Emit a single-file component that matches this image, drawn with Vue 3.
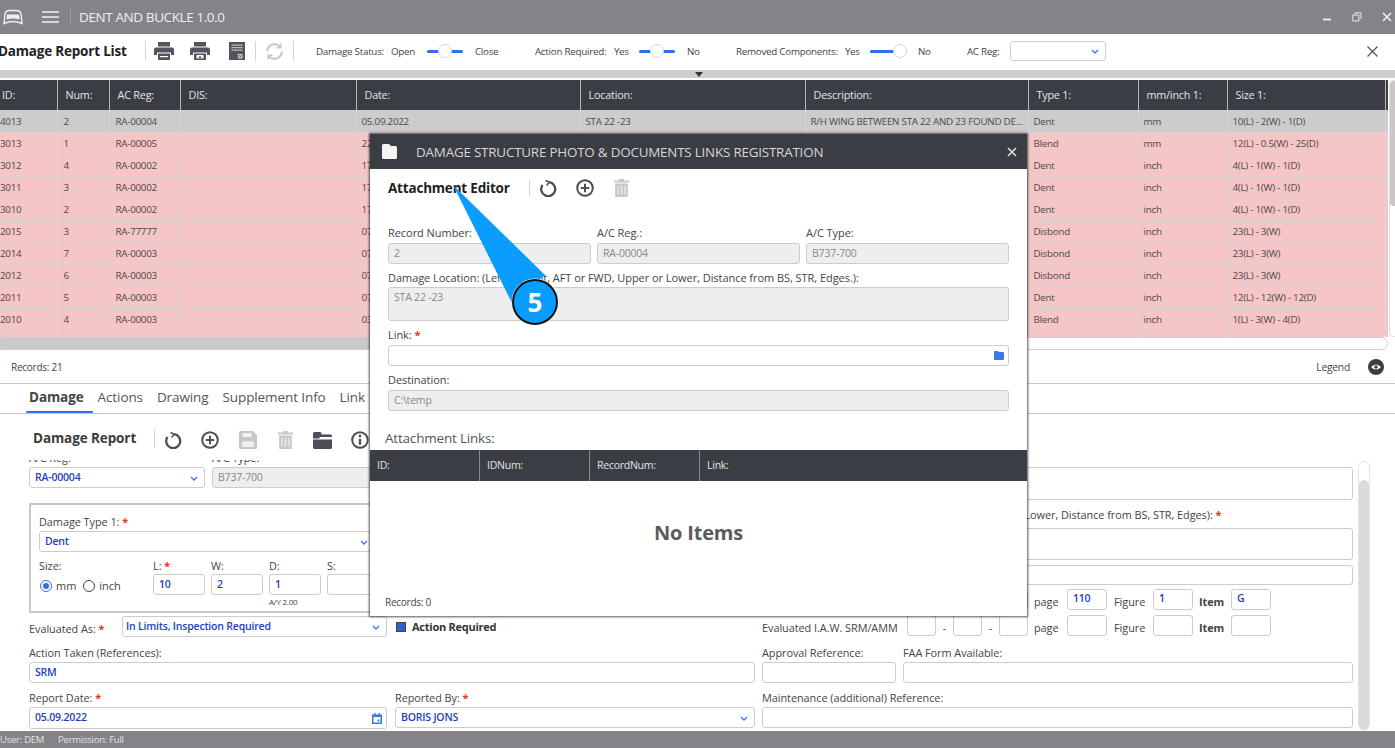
<script setup>
const columns = [
  { label: 'ID:', width: 63 }, { label: 'Num:', width: 52 }, { label: 'AC Reg:', width: 71 },
  { label: 'DIS:', width: 176 }, { label: 'Date:', width: 224 }, { label: 'Location:', width: 225 },
  { label: 'Description:', width: 223 }, { label: 'Type 1:', width: 110 }, { label: 'mm/inch 1:', width: 89 },
  { label: 'Size 1:', width: 158 }, { label: '', width: 3 }
]
const rows = [
  ['4013', '2', 'RA-00004', '', '05.09.2022', 'STA 22 -23', 'R/H WING BETWEEN STA 22 AND 23 FOUND DE...', 'Dent', 'mm', '10(L) - 2(W) - 1(D)'],
  ['3013', '1', 'RA-00005', '', '22.08.2022', '', '', 'Blend', 'mm', '12(L) - 0.5(W) - 25(D)'],
  ['3012', '4', 'RA-00002', '', '17.08.2022', '', '', 'Dent', 'inch', '4(L) - 1(W) - 1(D)'],
  ['3011', '3', 'RA-00002', '', '17.08.2022', '', '', 'Dent', 'inch', '4(L) - 1(W) - 1(D)'],
  ['3010', '2', 'RA-00002', '', '17.08.2022', '', '', 'Dent', 'inch', '4(L) - 1(W) - 1(D)'],
  ['2015', '3', 'RA-77777', '', '07.08.2022', '', '', 'Disbond', 'inch', '23(L) - 3(W)'],
  ['2014', '7', 'RA-00003', '', '07.08.2022', '', '', 'Disbond', 'inch', '23(L) - 3(W)'],
  ['2012', '6', 'RA-00003', '', '07.08.2022', '', '', 'Disbond', 'inch', '23(L) - 3(W)'],
  ['2011', '5', 'RA-00003', '', '07.08.2022', '', '', 'Dent', 'inch', '12(L) - 12(W) - 12(D)'],
  ['2010', '4', 'RA-00003', '', '03.08.2022', '', '', 'Blend', 'inch', '1(L) - 3(W) - 4(D)'],
  ['', '', '', '', '', '', '', '', '', '']
]
const tabs = ['Damage', 'Actions', 'Drawing', 'Supplement Info', 'Link']
const linkCols = [
  { label: 'ID:', width: 110 }, { label: 'IDNum:', width: 110 }, { label: 'RecordNum:', width: 110 }, { label: 'Link:', width: 327 }
]
</script>

<template>
  <div class="app">
    <header class="titlebar">
      <svg class="plane" width="22" height="16" viewBox="0 0 22 16"><path d="M2 14.500 3 5Q3.500 2 7 1.500h8Q18.500 2 19 5l1 9.500Q11 10.500 2 14.500Z" fill="none" stroke="#f0eff0" stroke-width="1.400"/><path d="M5 5.500h12l.6 5Q11 8.500 4.400 10.500Z" fill="#f0eff0"/></svg>
      <svg class="burger" width="17" height="12" viewBox="0 0 17 12"><path d="M0 1h17M0 6h17M0 11h17" stroke="#f2f2f2" stroke-width="1.700"/></svg>
      <span class="title-sep"></span>
      <span class="app-name">DENT AND BUCKLE 1.0.0</span>
      <span class="win-controls">
        <svg width="10" height="10" viewBox="0 0 10 10"><path d="M1 7.500h8" stroke="#e8e8e8" stroke-width="2"/></svg>
        <svg width="10" height="10" viewBox="0 0 10 10"><path d="M3 2.500V.8h6v5.500H7.500M.8 3h6v6h-6Z" fill="none" stroke="#e8e8e8" stroke-width="1"/></svg>
        <svg width="10" height="10" viewBox="0 0 10 10"><path d="m1 1 8 8M9 1l-8 8" stroke="#f2f2f2" stroke-width="1.500"/></svg>
      </span>
    </header>

    <div class="list-toolbar">
      <strong class="list-title">Damage Report List</strong>
      <i class="sep"></i>
      <span class="tool-btn">
        <svg width="20" height="18" viewBox="0 0 20 18"><path d="M4 0h12v4.500H4ZM2 5.500h16a2 2 0 0 1 2 2V13h-3v-2.500H3V13H0V7.500a2 2 0 0 1 2-2ZM4 11.500h12V18H4Z" fill="#53555c"/><path d="M6 14h8v1.200H6Z" fill="#fff"/></svg>
      </span>
      <span class="tool-btn">
        <svg width="20" height="18" viewBox="0 0 20 18"><path d="M4 0h12v4.500H4ZM2 5.500h16a2 2 0 0 1 2 2V13h-3v-2.500H3V13H0V7.500a2 2 0 0 1 2-2ZM4 11.500h12V18H4Z" fill="#53555c"/><path d="M6.500 13h7v3.500h-7Z" fill="#fff"/><path d="m8 16 2-2 2 2Z" fill="#53555c"/></svg>
      </span>
      <span class="tool-btn">
        <svg width="16" height="18" viewBox="0 0 16 18"><path d="M0 0h16v18H0Z" fill="#53555c"/><path d="M2.500 2.500h11v1.300h-11ZM2.500 5h11v1.300h-11ZM2.500 7.500h11v1.300h-11Z" fill="#b9b9bd"/><path d="M9 12h4.500v4.500H9Z" fill="#d8d8da"/><path d="m10 13 2.500 2.500M12.500 13 10 15.500" stroke="#53555c"/></svg>
      </span>
      <i class="sep"></i>
      <span class="tool-btn wide">
        <svg width="19" height="19" viewBox="0 0 19 19" fill="none" stroke="#c9c8cb" stroke-width="2.200"><path d="M2.200 9.500A7.300 7.300 0 0 1 15 4.700"/><path d="M16.800 9.500A7.300 7.300 0 0 1 4 14.300"/><path d="M15.800 1.500v4.300h-4.300M3.200 17.500v-4.300h4.300" stroke-width="1.600"/></svg>
      </span>
      <i class="sep"></i>
      <span class="switch-label w-status">Damage Status:</span><span class="switch-value w-open">Open</span>
      <span class="toggle"><b class="knob mid"></b></span><span class="switch-value w-close">Close</span>
      <span class="switch-label w-action">Action Required:</span><span class="switch-value w-yes">Yes</span>
      <span class="toggle"><b class="knob mid"></b></span><span class="switch-value w-no">No</span>
      <span class="switch-label w-removed">Removed Components:</span><span class="switch-value w-yes">Yes</span>
      <span class="toggle"><b class="knob end"></b></span><span class="switch-value w-no">No</span>
      <span class="switch-label w-acreg">AC Reg:</span>
      <span class="ac-select"><svg class="chev" width="8" height="5" viewBox="0 0 8 5"><path d="m1 1 3 3 3-3" fill="none" stroke="#3b78e7" stroke-width="1.300"/></svg></span>
      <svg class="list-close" width="11" height="11" viewBox="0 0 11 11"><path d="m.5.500 10 10M10.500.500l-10 10" stroke="#55575c" stroke-width="1.300"/></svg>
    </div>

    <div class="collapse-strip"><svg width="8" height="5" viewBox="0 0 8 5"><path d="M0 0h8L4 5Z" fill="#333"/></svg></div>

    <section class="grid-area">
      <div class="grid-main">
        <div class="table-clip">
          <table class="data-table">
            <colgroup><col v-for="c in columns" :key="c.label" :style="{ width: c.width + 'px' }" /></colgroup>
            <thead><tr><th v-for="c in columns" :key="c.label">{{ c.label }}</th></tr></thead>
            <tbody>
              <tr v-for="(r, i) in rows" :key="i" :class="i === 0 ? 'selected' : 'pink'">
                <td v-for="(v, j) in r" :key="j">{{ v }}</td><td></td>
              </tr>
            </tbody>
          </table>
        </div>
        <div class="h-scroll"><div class="h-thumb"></div></div>
      </div>
      <div class="v-scroll"><div class="v-thumb"></div></div>
    </section>

    <div class="records-bar">
      <span>Records: 21</span>
      <span class="legend">Legend</span>
      <svg width="16" height="16" viewBox="0 0 16 16"><circle cx="8" cy="8" r="8" fill="#3b3d44"/><path d="M3 8q5-5 10 0-5 5-10 0Z" fill="#fff"/><circle cx="8" cy="8" r="1.700" fill="#3b3d44"/></svg>
    </div>

    <nav class="tabs">
      <span v-for="(t, i) in tabs" :key="t" class="tab" :class="{ active: i === 0 }">{{ t }}</span>
    </nav>

    <div class="report-toolbar">
      <strong class="report-title">Damage Report</strong>
      <i class="sep report-sep"></i>
      <span class="r-btn"><svg width="18" height="18" viewBox="0 0 18 18" fill="none" stroke="#4d4f56" stroke-width="2.300"><path d="M10.500 3.200A7 7 0 1 1 3.500 6"/><path d="M6.500 1.500 10.500 3.200 7.500 6.500" stroke-width="1.500"/></svg></span>
      <span class="r-btn"><svg width="18" height="18" viewBox="0 0 18 18" fill="none" stroke="#4d4f56" stroke-width="2"><circle cx="9" cy="9" r="7.800"/><path d="M9 4.800v8.400M4.800 9h8.400"/></svg></span>
      <span class="r-btn"><svg width="18" height="18" viewBox="0 0 18 18"><path d="M0 1.500A1.500 1.500 0 0 1 1.500 0h12.500L18 4v12.500a1.500 1.500 0 0 1-1.500 1.500h-15A1.500 1.500 0 0 1 0 16.500Z" fill="#c8c7cb"/><path d="M3.500 2h9v4h-9ZM3 10.500h12V16H3Z" fill="#f1f1f2"/></svg></span>
      <span class="r-btn"><svg width="15" height="18" viewBox="0 0 15 18"><path d="M5 0h5v1.500h5v2H0v-2h5ZM1.200 4.500h12.600V18H1.200Z" fill="#c8c7cb"/><path d="M4 7v8.500M7.500 7v8.500M11 7v8.500" stroke="#f1f1f2" stroke-width="1.200"/></svg></span>
      <span class="r-btn"><svg width="19" height="17" viewBox="0 0 19 17"><path d="M1.500 0H7a1.500 1.500 0 0 1 1.500 1.500V2.500h9A1.500 1.500 0 0 1 19 4v1H7L6 6.500H0v-5A1.500 1.500 0 0 1 1.500 0ZM0 7.500h19v8a1.500 1.500 0 0 1-1.500 1.500h-16A1.500 1.500 0 0 1 0 15.500Z" fill="#4d4f56"/></svg></span>
      <span class="r-btn"><svg width="18" height="18" viewBox="0 0 18 18"><circle cx="9" cy="9" r="7.800" fill="none" stroke="#4d4f56" stroke-width="2"/><path d="M7.800 7.800h2.400v6H7.800ZM7.800 3.800h2.400v2.400H7.800Z" fill="#4d4f56"/></svg></span>
    </div>

    <div class="form-area">
      <div class="form-inner">
        <div class="col-left">
          <div class="row r-top">
            <div class="w176"><label class="lbl">A/C Reg:</label><div class="inp val sel">RA-00004<svg class="chev" width="8" height="5" viewBox="0 0 8 5"><path d="m1 1 3 3 3-3" fill="none" stroke="#3b78e7" stroke-width="1.300"/></svg></div></div>
            <div class="w176"><label class="lbl">A/C Type:</label><div class="inp off">B737-700</div></div>
          </div>
          <fieldset class="damage-box">
            <label class="lbl type-lbl">Damage Type 1: <em>*</em></label>
            <div class="inp val sel type-select">Dent<svg class="chev" width="8" height="5" viewBox="0 0 8 5"><path d="m1 1 3 3 3-3" fill="none" stroke="#3b78e7" stroke-width="1.300"/></svg></div>
            <div class="size-row">
              <div class="size-cell">
                <label class="lbl">Size:</label>
                <div class="radios"><i class="radio on"></i><span>mm</span><i class="radio"></i><span>inch</span></div>
              </div>
              <div class="dim"><label class="lbl">L: <em>*</em></label><div class="inp val">10</div></div>
              <div class="dim"><label class="lbl">W:</label><div class="inp val">2</div></div>
              <div class="dim"><label class="lbl">D:</label><div class="inp val">1</div><small class="ay">A/Y 2.00</small></div>
              <div class="dim"><label class="lbl">S:</label><div class="inp"></div></div>
            </div>
          </fieldset>
          <div class="row r-eval">
            <label class="lbl eval-lbl">Evaluated As: <em>*</em></label>
            <div class="inp val sel eval-select">In Limits, Inspection Required<svg class="chev" width="8" height="5" viewBox="0 0 8 5"><path d="m1 1 3 3 3-3" fill="none" stroke="#3b78e7" stroke-width="1.300"/></svg></div>
            <i class="check"></i><strong class="check-lbl">Action Required</strong>
          </div>
          <label class="lbl m-taken">Action Taken (References):</label>
          <div class="inp val">SRM</div>
          <div class="row r-report">
            <div class="w358"><label class="lbl">Report Date: <em>*</em></label>
              <div class="inp val sel tall">05.09.2022<svg class="chev cal" width="10" height="11" viewBox="0 0 10 11"><path d="M0 1.500h10V11H0Z" fill="#3b78e7"/><path d="M1.500 4h7v5.500h-7Z" fill="#fff"/><path d="M2 0h1.500v2H2ZM6.500 0H8v2H6.500ZM5.500 6.500h2v2h-2Z" fill="#3b78e7"/></svg></div></div>
            <div class="w360"><label class="lbl">Reported By: <em>*</em></label>
              <div class="inp val sel">BORIS JONS<svg class="chev" width="8" height="5" viewBox="0 0 8 5"><path d="m1 1 3 3 3-3" fill="none" stroke="#3b78e7" stroke-width="1.300"/></svg></div></div>
          </div>
        </div>

        <div class="col-right">
          <div class="inp area-1"></div>
          <label class="lbl m-loc">Damage Location: (Left or Right, AFT/FWD, Upper or Lower, Distance from BS, STR, Edges): <em>*</em></label>
          <div class="inp area-2"></div>
          <div class="inp m-5 h20"></div>
          <div class="ref-row m-4">
            <span class="ref-lbl">Evaluated I.A.W. SRM/AMM</span>
            <div class="inp sm"></div><span class="dash">-</span><div class="inp sm"></div><span class="dash">-</span><div class="inp sm"></div>
            <span class="t-page">page</span><div class="inp md val">110</div>
            <span class="t-fig">Figure</span><div class="inp md val">1</div>
            <b class="t-item">Item</b><div class="inp md val">G</div>
          </div>
          <div class="ref-row m-5">
            <span class="ref-lbl">Evaluated I.A.W. SRM/AMM</span>
            <div class="inp sm"></div><span class="dash">-</span><div class="inp sm"></div><span class="dash">-</span><div class="inp sm"></div>
            <span class="t-page">page</span><div class="inp md"></div>
            <span class="t-fig">Figure</span><div class="inp md"></div>
            <b class="t-item">Item</b><div class="inp md"></div>
          </div>
          <div class="row r-approval">
            <div class="w134"><label class="lbl">Approval Reference:</label><div class="inp"></div></div>
            <div class="grow"><label class="lbl">FAA Form Available:</label><div class="inp"></div></div>
          </div>
          <label class="lbl m-maint">Maintenance (additional) Reference:</label>
          <div class="inp"></div>
        </div>
      </div>
      <div class="form-scroll"><div class="form-thumb"></div></div>
    </div>

    <footer class="statusbar"><span>User: DEM</span><span>Permission: Full</span></footer>

    <div class="modal">
      <div class="modal-head">
        <svg width="15" height="15" viewBox="0 0 15 15"><path d="M1.500 0H7l2 2h4.500A1.500 1.500 0 0 1 15 3.500v10a1.500 1.500 0 0 1-1.500 1.500h-12A1.500 1.500 0 0 1 0 13.500v-12A1.500 1.500 0 0 1 1.500 0Z" fill="#f4f4f4"/></svg>
        <span class="modal-title">DAMAGE STRUCTURE PHOTO &amp; DOCUMENTS LINKS REGISTRATION</span>
        <svg class="modal-x" width="10" height="10" viewBox="0 0 10 10"><path d="m1 1 8 8M9 1 1 9" stroke="#dcdcdc" stroke-width="1.700"/></svg>
      </div>
      <div class="modal-body">
        <div class="modal-tools">
          <strong class="att-title">Attachment Editor</strong>
          <i class="sep att-sep"></i>
          <span class="a-btn"><svg width="18" height="18" viewBox="0 0 18 18" fill="none" stroke="#4d4f56" stroke-width="2.300"><path d="M10.500 3.200A7 7 0 1 1 3.500 6"/><path d="M6.500 1.500 10.500 3.200 7.500 6.500" stroke-width="1.500"/></svg></span>
          <span class="a-btn"><svg width="18" height="18" viewBox="0 0 18 18" fill="none" stroke="#4d4f56" stroke-width="2"><circle cx="9" cy="9" r="7.800"/><path d="M9 4.800v8.400M4.800 9h8.400"/></svg></span>
          <span class="a-btn"><svg width="15" height="18" viewBox="0 0 15 18"><path d="M5 0h5v1.500h5v2H0v-2h5ZM1.200 4.500h12.600V18H1.200Z" fill="#c8c7cb"/><path d="M4 7v8.500M7.500 7v8.500M11 7v8.500" stroke="#f1f1f2" stroke-width="1.200"/></svg></span>
        </div>
        <div class="modal-fields">
          <div class="three">
            <div><label class="lbl">Record Number:</label><div class="inp off">2</div></div>
            <div><label class="lbl">A/C Reg.:</label><div class="inp off">RA-00004</div></div>
            <div><label class="lbl">A/C Type:</label><div class="inp off">B737-700</div></div>
          </div>
          <label class="lbl mf-gap">Damage Location: (Left or Right, AFT or FWD, Upper or Lower, Distance from BS, STR, Edges.):</label>
          <div class="inp off loc-area">STA 22 -23</div>
          <label class="lbl mf-gap2">Link: <em>*</em></label>
          <div class="inp sel">
            <svg class="chev cal" width="10" height="9" viewBox="0 0 10 9"><path d="M0 1a1 1 0 0 1 1-1h3l1 1h4a1 1 0 0 1 1 1v6a1 1 0 0 1-1 1H1a1 1 0 0 1-1-1Z" fill="#3b78e7"/></svg>
          </div>
          <label class="lbl mf-gap3">Destination:</label>
          <div class="inp off">C:\temp</div>
        </div>
        <div class="links-title">Attachment Links:</div>
        <div class="links-head"><span v-for="c in linkCols" :key="c.label" :style="{ width: c.width + 'px' }">{{ c.label }}</span></div>
        <div class="no-items">No Items</div>
        <div class="modal-records">Records: 0</div>
      </div>
    </div>

    <svg class="callout" width="120" height="150" viewBox="0 0 120 150">
      <path d="M3 0 62 118 95 90Z" fill="#0a9cff"/>
      <circle cx="85" cy="117" r="23.500" fill="#fff"/>
      <circle cx="85" cy="117" r="22" fill="#0a9cff" stroke="#111" stroke-width="2"/>
      <text x="85" y="127" text-anchor="middle">5</text>
    </svg>
  </div>
</template>

<style>
html, body { margin: 0; overflow: hidden; background: #fff; }
</style>

<style scoped>
.app {
  position: relative;
  width: 1395px;
  height: 748px;
  overflow: hidden;
  display: flex;
  flex-direction: column;
  background: #fff;
  font-family: "Open Sans", "Noto Sans", sans-serif;
  font-size: 10px;
  color: #444;
  letter-spacing: -0.25px;
}
i, em, b { font-style: normal; }
em { color: #e5341c; font-weight: 700; }

.titlebar { height: 34px; flex: none; background: #858387; display: flex; align-items: center; color: #f0f0f0; }
.plane { margin-left: 2px; }
.burger { margin-left: 18px; }
.title-sep { width: 1px; height: 18px; background: #9b999c; margin: 0 8px 0 11px; }
.app-name { font-size: 13.500px; letter-spacing: -0.4px; color: #efefef; }
.win-controls { margin-left: auto; display: flex; gap: 20px; margin-right: 3px; }

.list-toolbar { height: 34px; padding-bottom: 2px; flex: none; display: flex; align-items: center; font-size: 9.800px; color: #444; }
.list-title { width: 147px; margin-left: -2px; font-size: 13.500px; color: #222; letter-spacing: -0.2px; white-space: nowrap; }
.sep { width: 1px; height: 20px; background: #d5d3d6; flex: none; }
.tool-btn { width: 36.300px; display: flex; justify-content: center; flex: none; }
.tool-btn.wide { width: 37px; }
.switch-label, .switch-value { flex: none; white-space: nowrap; }
.w-status { margin-left: 22px; width: 75px; }
.w-open { width: 36px; }
.w-close { width: 60px; margin-left: 12px; }
.w-action { width: 79px; }
.w-yes { width: 25px; }
.w-no { width: 49px; margin-left: 12px; }
.w-removed { width: 109px; }
.w-acreg { width: 43px; }
.toggle { position: relative; width: 36px; height: 3px; background: #2f6fec; border-radius: 2px; flex: none; }
.knob { position: absolute; top: -6px; width: 14px; height: 14px; border-radius: 50%; background: #fff; border: 1px solid #d5d3d6; box-sizing: border-box; }
.knob.mid { left: 11px; }
.knob.end { right: -1px; }
.ac-select { position: relative; width: 96px; height: 20px; box-sizing: border-box; border: 1px solid #cfcccf; border-radius: 3px; flex: none; }
.chev { position: absolute; right: 6px; top: 50%; margin-top: -2px; }
.chev.cal { margin-top: -5px; right: 4px; }
.list-close { margin-left: auto; margin-right: 17px; }

.collapse-strip { height: 8px; flex: none; background: #d0ced1; border-bottom: 2px solid #fff; display: flex; justify-content: center; align-items: center; padding-left: 2px; }

.grid-area { height: 270px; flex: none; display: flex; }
.grid-main { width: 1388px; flex: none; display: flex; flex-direction: column; }
.table-clip { height: 257px; overflow: hidden; flex: none; }
.data-table { border-collapse: collapse; table-layout: fixed; width: 1394px; margin-left: -6px; }
.data-table th { height: 30px; padding: 0 0 2px 8px; background: #3a3d44; color: #e4e4e6; font-size: 10.800px; font-weight: 400; text-align: left; border-right: 1px solid #b9b8bb; box-sizing: border-box; letter-spacing: -0.2px; }
.data-table td { height: 22px; padding: 1px 0 0 5px; font-size: 9.800px; color: #4a4a4c; border-right: 1px solid #dfd3d3; border-bottom: 1px solid #dcd2d2; box-sizing: border-box; white-space: nowrap; overflow: hidden; }
.data-table td:nth-child(-n+3) { padding-left: 6px; }
.selected td { background: #cdcbce; border-color: #d6d4d7; }
.pink td { background: #f6c5c5; }
.h-scroll { height: 13px; flex: none; box-sizing: border-box; border: 1px solid #d0cdd0; border-radius: 0 7px 7px 0; }
.h-thumb { width: 800px; height: 11px; background: #cbc9cc; }
.v-scroll { flex: 1; margin-left: 1px; border: 1px solid #e2e0e3; border-right: 0; border-radius: 5px 0 0 5px; box-sizing: border-box; margin-bottom: 13px; position: relative; }
.v-thumb { height: 125px; background: #cbc7c8; border-radius: 4px 0 0 4px; }

.records-bar { height: 33px; flex: none; border-bottom: 1px solid #cbc8ca; display: flex; align-items: center; padding-left: 11px; padding-right: 11px; font-size: 10px; color: #444; }
.legend { margin-left: auto; margin-right: 18px; font-size: 10.300px; }

.tabs { height: 25px; padding-bottom: 4px; flex: none; border-bottom: 1px solid #cbc8ca; display: flex; gap: 14px; padding-left: 29px; font-size: 13.500px; color: #555; align-items: center; letter-spacing: -0.1px; }
.tab { position: relative; line-height: 26px; }
.tab.active { font-weight: 700; color: #444; }
.tab.active::after { content: ""; position: absolute; left: -3px; right: -9px; bottom: -3px; height: 2px; background: #2f6fec; border-radius: 1px; }

.report-toolbar { height: 44px; padding-top: 2px; flex: none; display: flex; align-items: center; padding-left: 33px; }
.report-title { width: 121px; font-size: 13.500px; color: #3c3c3c; white-space: nowrap; letter-spacing: -0.1px; }
.report-sep { height: 18px; margin-top: 2px; margin-right: -1px; }
.r-btn { width: 37.500px; display: flex; justify-content: center; flex: none; margin-top: 4px; }

.form-area { height: 271px; flex: none; display: flex; overflow: hidden; padding-left: 29px; box-sizing: border-box; }
.form-inner { width: 1324px; margin-top: -12px; display: flex; gap: 7px; flex: none; }
.col-left { width: 726px; flex: none; display: flex; flex-direction: column; }
.col-right { flex: 1; min-width: 0; display: flex; flex-direction: column; padding-top: 19px; }
.form-scroll { width: 12px; height: 269px; margin: 1px 0 0 5px; box-sizing: border-box; border: 1px solid #e3e1e4; border-radius: 6px; flex: none; }
.form-thumb { height: 250px; margin-top: 18px; background: #dcdadd; border-radius: 5px; }

.lbl { display: block; height: 14px; line-height: 14px; font-size: 10.900px; letter-spacing: -0.05px; color: #444; white-space: nowrap; }
.modal-fields .lbl { font-size: 11px; }
.inp {
  position: relative;
  height: 21px;
  line-height: 19px;
  box-sizing: border-box;
  border: 1px solid #cfcbcd;
  border-radius: 3px;
  padding: 0 4px 0 5px;
  font-size: 10.500px;
  letter-spacing: -0.2px;
  background: #fff;
  color: #555;
  flex: none;
  white-space: nowrap;
}
.inp.val { color: #1c3fc0; font-weight: 600; }
.inp.off { background: #efeeef; color: #888; }
.h20 { height: 20px; }
.row { display: flex; }
.r-top { gap: 7px; padding-top: 3px; }
.r-top .lbl { margin-bottom: 2px; }
.w176 { width: 176px; flex: none; }
.damage-box { margin: 15px 0 0; padding: 10px 8px 0 8px; width: 100%; height: 110px; box-sizing: border-box; border: 2px solid #cbc7c7; min-width: 0; }
.type-lbl { margin-bottom: 2px; }
.type-select { width: 336px; }
.size-row { display: flex; margin-top: 7px; gap: 6px; }
.size-row .lbl { margin-bottom: 1px; }
.size-cell { width: 108px; flex: none; }
.radios { display: flex; align-items: center; gap: 4px; margin-top: 5px; margin-left: 1px; font-size: 11px; letter-spacing: -0.05px; }
.radios span { margin-right: 3px; }
.radio { width: 10px; height: 10px; border: 1px solid #444; border-radius: 50%; display: block; background: #fff; position: relative; }
.radio.on { border-color: #2f6fec; }
.radio.on::after { content: ""; position: absolute; inset: 2px; background: #2f6fec; border-radius: 50%; }
.dim { width: 52px; flex: none; position: relative; }
.ay { position: absolute; left: 0; top: 37px; font-size: 8px; white-space: nowrap; color: #444; }
.r-eval { margin-top: 3px; align-items: center; }
.eval-lbl { width: 93px; padding-top: 4px; }
.eval-select { width: 265px; padding-left: 3px; }
.check { background: #2f5fd0; border: 1px solid #444; box-sizing: content-box; margin-left: 9px; width: 8px; height: 8px; }
.check-lbl { margin-left: 6px; font-size: 11px; color: #333; white-space: nowrap; }
.m-taken { margin-top: 9px; margin-bottom: 2px; }
.r-report { gap: 8px; margin-top: 8px; }
.r-report .lbl { margin-bottom: 2px; }
.w358 { width: 358px; flex: none; }
.w360 { width: 360px; flex: none; }
.tall { height: 22px; }

.area-1 { height: 33px; }
.m-loc { margin-top: 8px; margin-bottom: 6px; }
.area-2 { height: 32px; }
.m-5 { margin-top: 5px; }
.m-4 { margin-top: 4px; }
.ref-row { display: flex; align-items: center; height: 21px; font-size: 10.900px; letter-spacing: -0.05px; }
.ref-lbl { width: 135px; overflow: hidden; white-space: nowrap; flex: none; margin-right: 10px; padding-top: 4px; }
.sm { width: 29px; }
.md { width: 40px; line-height: 17px; }
.dash { width: 17px; text-align: center; flex: none; padding-top: 3px; }
.t-page { width: 33px; margin-left: 6px; flex: none; padding-top: 4px; }
.t-fig { width: 39px; margin-left: 7px; flex: none; padding-top: 4px; }
.t-item { width: 32px; margin-left: 6px; flex: none; font-weight: 700; color: #444; padding-top: 4px; }
.r-approval { gap: 7px; margin-top: 10px; }
.r-approval .lbl { margin-bottom: 2px; }
.w134 { width: 134px; flex: none; }
.grow { flex: 1; min-width: 0; }
.m-maint { margin-top: 8px; margin-bottom: 2px; }

.statusbar { flex: none; height: 17px; background: #858387; color: #e2e2e2; display: flex; gap: 14px; align-items: center; font-size: 9.500px; }

.modal {
  position: absolute;
  left: 370px;
  top: 134px;
  width: 657px;
  height: 482px;
  background: #fff;
  box-shadow: 0 0 2px 1px rgba(30, 30, 30, .75);
  display: flex;
  flex-direction: column;
}
.modal-head { height: 35px; flex: none; background: #3a3d44; display: flex; align-items: center; padding-left: 12px; }
.modal-title { margin-left: 19px; margin-top: 1px; font-size: 13.400px; color: #d6d6d8; letter-spacing: -0.2px; white-space: nowrap; }
.modal-x { margin-left: auto; margin-right: 10px; }
.modal-body { flex: 1; display: flex; flex-direction: column; min-height: 0; }
.modal-tools { height: 38px; flex: none; display: flex; align-items: center; padding-left: 18px; }
.att-title { width: 141px; font-size: 13.500px; color: #1f1f1f; white-space: nowrap; letter-spacing: -0.2px; }
.att-sep { height: 18px; margin-right: -1px; }
.a-btn { width: 37px; display: flex; justify-content: center; flex: none; }
.modal-fields { padding: 19px 18px 0 18px; }
.three { display: grid; grid-template-columns: 203px 203px 203px; gap: 6px; }
.three .lbl { margin-bottom: 3px; }
.mf-gap { margin-top: 7px; margin-bottom: 2px; }
.loc-area { height: 34px; }
.mf-gap2 { margin-top: 7px; margin-bottom: 3px; }
.mf-gap3 { margin-top: 7px; margin-bottom: 3px; }
.links-title { margin: 18px 0 0 15px; height: 21px; line-height: 19px; font-size: 13.500px; color: #555; letter-spacing: -0.2px; }
.links-head { height: 31px; flex: none; background: #3a3d44; display: flex; color: #e4e4e6; font-size: 10.500px; }
.links-head span { box-sizing: border-box; line-height: 31px; padding-left: 7px; border-right: 1px solid #8a8b90; }
.links-head span:last-child { border-right: 0; }
.no-items { margin-top: 40px; text-align: center; font-size: 20px; font-weight: 700; color: #5b5b5d; letter-spacing: -0.2px; line-height: 24px; }
.modal-records { margin: 50px 0 0 15px; font-size: 10px; color: #444; }

.callout { position: absolute; left: 450px; top: 185px; overflow: visible; }
.callout text { font-family: "Open Sans", sans-serif; font-size: 26px; font-weight: 700; fill: #fff; letter-spacing: 0; }
</style>
